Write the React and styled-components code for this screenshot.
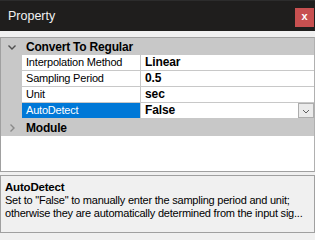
import React from "react";
import styled, { createGlobalStyle } from "styled-components";

const GlobalStyle = createGlobalStyle`
  html, body {
    margin: 0;
    padding: 0;
    background: #f0f0f0;
  }
  body {
    font-family: "Liberation Sans", Arial, sans-serif;
    font-size: 11px;
    letter-spacing: -0.1px;
    color: #000;
  }
`;

const rows = [
  { name: "Interpolation Method", value: "Linear" },
  { name: "Sampling Period", value: "0.5" },
  { name: "Unit", value: "sec" },
  { name: "AutoDetect", value: "False", selected: true, dropdown: true },
];

function App() {
  return (
    <>
      <GlobalStyle />
      <Window>
        <TitleBar>
          <Title>Property</Title>
          <CloseButton aria-label="close">x</CloseButton>
        </TitleBar>
        <Body>
          <Grid>
            <Category>
              <Margin>
                <Chevron viewBox="0 0 10 10" width="10" height="10">
                  <path d="M1.5 3.5 L5 7 L8.5 3.5" />
                </Chevron>
              </Margin>
              <CategoryLabel>Convert To Regular</CategoryLabel>
            </Category>
            {rows.map((row) => (
              <Row key={row.name}>
                <Margin />
                <NameCell selected={row.selected}>{row.name}</NameCell>
                <ValueCell>
                  <span>{row.value}</span>
                  {row.dropdown && (
                    <DropButton>
                      <svg viewBox="0 0 10 10" width="10" height="10">
                        <path
                          d="M2 4 L5 7 L8 4"
                          fill="none"
                          stroke="#606060"
                          strokeWidth="1"
                        />
                      </svg>
                    </DropButton>
                  )}
                </ValueCell>
              </Row>
            ))}
            <Category>
              <Margin>
                <Chevron viewBox="0 0 10 10" width="10" height="10" $muted>
                  <path d="M3.5 1.5 L7 5 L3.5 8.5" />
                </Chevron>
              </Margin>
              <CategoryLabel>Module</CategoryLabel>
            </Category>
          </Grid>
          <Description>
            <DescTitle>AutoDetect</DescTitle>
            <DescLine>Set to "False" to manually enter the sampling period and unit;</DescLine>
            <DescLine>otherwise they are automatically determined from the input sig...</DescLine>
          </Description>
        </Body>
      </Window>
    </>
  );
}
export default App;

const Window = styled.div`
  width: 315px;
  height: 240px;
  display: flex;
  flex-direction: column;
  background: #f0f0f0;
  overflow: hidden;
`;

const TitleBar = styled.div`
  height: 31px;
  flex-shrink: 0;
  box-sizing: border-box;
  background: #1f1e1d;
  border-top: 1px solid #2c2c2c;
  display: flex;
  align-items: center;
  justify-content: space-between;
  padding: 0 1px 2px 8px;
`;

const Title = styled.div`
  color: #f2f2f2;
  font-size: 12.5px;
  letter-spacing: 0;
  padding-top: 2px;
`;

const CloseButton = styled.div`
  width: 19px;
  height: 19px;
  margin-top: 5px;
  background: #c75050;
  color: #fff;
  font-weight: bold;
  font-size: 11px;
  display: flex;
  align-items: center;
  justify-content: center;
  line-height: 1;
  padding-bottom: 2px;
  box-sizing: border-box;
`;

const Body = styled.div`
  flex: 1;
  display: flex;
  flex-direction: column;
  gap: 3px;
  padding: 6px 0 7px 0;
`;

const Grid = styled.div`
  height: 135px;
  box-sizing: border-box;
  border: 1px solid #a0a0a0;
  border-right-color: #b0b0b0;
  background: #fff;
  display: flex;
  flex-direction: column;
`;

const Category = styled.div`
  height: 17px;
  flex-shrink: 0;
  display: flex;
  align-items: center;
  background: #c8c8c8;
`;

const Margin = styled.div`
  width: 21px;
  align-self: stretch;
  flex-shrink: 0;
  background: #c8c8c8;
  display: flex;
  align-items: center;
  justify-content: center;
`;

const Chevron = styled.svg`
  fill: none;
  stroke: ${(p) => (p.$muted ? "#8a8a8a" : "#505050")};
  stroke-width: 1.4;
`;

const CategoryLabel = styled.div`
  font-weight: bold;
  padding-left: 4px;
  font-size: 12px;
  letter-spacing: -0.2px;
`;

const Row = styled.div`
  height: 16px;
  flex-shrink: 0;
  box-sizing: border-box;
  display: flex;
  border-bottom: 1px solid #c8c8c8;
`;

const NameCell = styled.div`
  width: 119px;
  flex-shrink: 0;
  box-sizing: border-box;
  padding-left: 4px;
  border-right: 1px solid #c8c8c8;
  line-height: 15px;
  font-size: 11px;
  letter-spacing: -0.2px;
  white-space: nowrap;
  overflow: hidden;
  background: ${(p) => (p.selected ? "#0078d7" : "#fff")};
  color: ${(p) => (p.selected ? "#fff" : "#000")};
`;

const ValueCell = styled.div`
  flex: 1;
  display: flex;
  align-items: center;
  justify-content: space-between;
  padding-left: 4px;
  font-weight: bold;
  font-size: 12px;
  line-height: 15px;
`;

const DropButton = styled.div`
  width: 16px;
  height: 15px;
  box-sizing: border-box;
  border: 1px solid #adadad;
  background: #eaeaea;
  display: flex;
  align-items: center;
  justify-content: center;
`;

const Description = styled.div`
  height: 58px;
  box-sizing: border-box;
  border: 1px solid #a0a0a0;
  background: #f0f0f0;
  padding: 4px 4px;
`;

const DescTitle = styled.div`
  font-weight: bold;
  font-size: 11.5px;
  letter-spacing: -0.2px;
  line-height: 14px;
`;

const DescLine = styled.div`
  line-height: 13px;
  letter-spacing: -0.22px;
  white-space: nowrap;
`;
